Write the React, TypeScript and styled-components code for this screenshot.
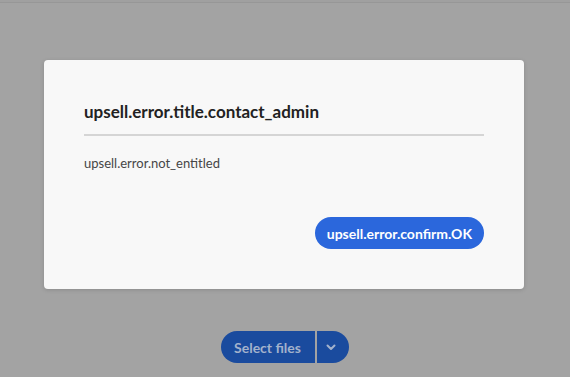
import React from "react";
import styled, { createGlobalStyle } from "styled-components";

const GlobalStyle = createGlobalStyle`
  html, body { margin: 0; padding: 0; }
  body {
    width: 570px;
    height: 377px;
    overflow: hidden;
    background: #a3a3a3;
    font-family: "Lato", "Open Sans", sans-serif;
  }
`;

const Page = styled.div`
  width: 570px;
  height: 377px;
  display: flex;
  flex-direction: column;
  align-items: center;
  background: #a3a3a3;
  box-sizing: border-box;
`;

const TopEdge = styled.div`
  align-self: stretch;
  height: 2px;
  background: #a0a0a0;
  border-bottom: 1px solid #979797;
`;

const Dialog = styled.div`
  align-self: flex-start;
  margin: 57px 0 0 44px;
  width: 480px;
  box-sizing: border-box;
  padding: 40px;
  background: #f8f8f8;
  border-radius: 4px;
  box-shadow: 0 1px 4px rgba(0, 0, 0, 0.15);
  display: flex;
  flex-direction: column;
`;

const Title = styled.h2`
  margin: 0;
  font-size: 17px;
  line-height: 24px;
  font-weight: 700;
  color: #222222;
`;

const Divider = styled.hr`
  margin: 10px 0 0;
  border: none;
  height: 2px;
  background: #d5d5d5;
`;

const Body = styled.p`
  margin: 18px 0 0;
  font-size: 13px;
  line-height: 18px;
  color: #464646;
`;

const Actions = styled.div`
  margin-top: 45px;
  display: flex;
  justify-content: flex-end;
`;

const ConfirmButton = styled.button`
  height: 32px;
  padding: 0 12px;
  border: none;
  border-radius: 16px;
  background: #2b67dc;
  color: #ffffff;
  font-family: inherit;
  font-size: 14px;
  font-weight: 700;
`;

const Spacer = styled.div`
  flex: 1;
`;

const SplitGroup = styled.div`
  display: flex;
  gap: 2px;
  margin: 0 1px 14px 0;
`;

const SelectButton = styled.button`
  height: 32px;
  width: 94px;
  border: none;
  border-radius: 16px 0 0 16px;
  background: #1a4b9e;
  color: #a3b2cc;
  font-family: inherit;
  font-size: 14px;
  font-weight: 700;
`;

const ChevronButton = styled.button`
  height: 32px;
  width: 32px;
  border: none;
  border-radius: 0 16px 16px 0;
  background: #1a4b9e;
  display: flex;
  align-items: center;
  justify-content: center;
  padding: 0 3px 0 0;
`;

export default function App() {
  return (
    <>
      <GlobalStyle />
      <Page>
        <TopEdge />
        <Dialog>
          <Title>upsell.error.title.contact_admin</Title>
          <Divider />
          <Body>upsell.error.not_entitled</Body>
          <Actions>
            <ConfirmButton>upsell.error.confirm.OK</ConfirmButton>
          </Actions>
        </Dialog>
        <Spacer />
        <SplitGroup>
          <SelectButton>Select files</SelectButton>
          <ChevronButton>
            <svg width="10" height="7" viewBox="0 0 10 7">
              <path d="M1.5 1.5 L5 5 L8.5 1.5" fill="none" stroke="#a3b2cc" strokeWidth="2" strokeLinecap="round" strokeLinejoin="round" />
            </svg>
          </ChevronButton>
        </SplitGroup>
      </Page>
    </>
  );
}
